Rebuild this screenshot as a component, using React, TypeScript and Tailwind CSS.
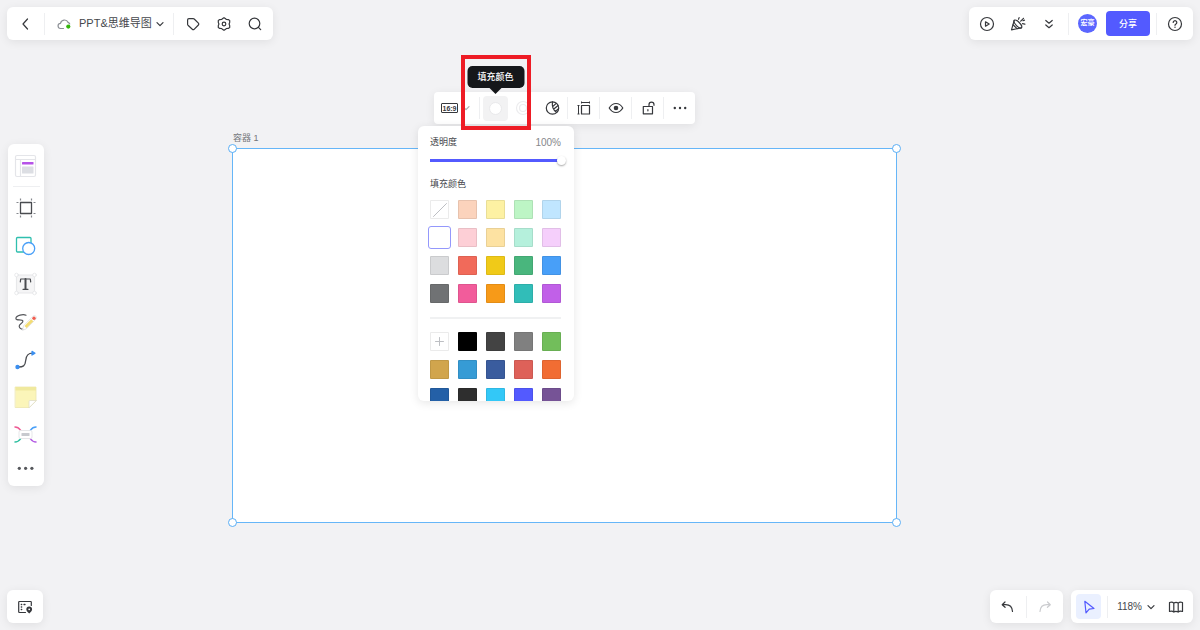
import { useState } from 'react';
import type { ReactNode } from 'react';

const presetColors = [
  'none', '#fbd3bc', '#fdf1a3', '#bdf5c5', '#c0e6ff',
  '#ffffff', '#fdcfd6', '#fde2a2', '#b5f0dc', '#f5cffb',
  '#dcdddf', '#f16a5a', '#f0ca18', '#49b67d', '#489ff8',
  '#707274', '#f25c9b', '#f79a18', '#31bdb8', '#c160e8',
];

const customColors = [
  'add', '#000000', '#434343', '#808080', '#72be5b',
  '#d1a54d', '#369bd5', '#3a5c9e', '#de6159', '#f16d33',
  '#2460a7', '#2e2e2e', '#33c8f7', '#535aff', '#765396',
];

const Icon = ({ size = 16, className = 'text-[#36383c]', children }: { size?: number; className?: string; children: ReactNode }) => (
  <svg
    width={size}
    height={size}
    viewBox={`0 0 ${size} ${size}`}
    fill="none"
    stroke="currentColor"
    strokeWidth="1.2"
    strokeLinecap="round"
    strokeLinejoin="round"
    className={`shrink-0 ${className}`}
    aria-hidden="true"
  >
    {children}
  </svg>
);

const IconButton = ({ label, className = 'w-[31px]', children }: { label: string; className?: string; children: ReactNode }) => (
  <button type="button" aria-label={label} className={`flex items-center justify-center self-stretch ${className}`}>
    {children}
  </button>
);

const Bar = ({ className = '', children }: { className?: string; children: ReactNode }) => (
  <div className={`flex h-[33px] items-center rounded-md bg-white shadow-[0_2px_10px_rgba(0,0,0,0.08)] ${className}`}>
    {children}
  </div>
);

const Divider = () => <div className="h-[22px] w-px shrink-0 bg-[#eeeff1]" />;

const ChevronDown = () => (
  <Icon size={8}>
    <path d="M1 2.6 4 5.6 7 2.6" />
  </Icon>
);

const Header = () => (
  <header className="relative flex justify-between px-[7px] pt-[7px]">
    <Bar className="pr-[2px] pl-px">
      <IconButton label="返回" className="w-9">
        <Icon><path d="M9.500 3 5 8l4.500 5" /></Icon>
      </IconButton>
      <Divider />
      <button type="button" className="flex items-center self-stretch pr-[9px] pl-3 text-[11px] text-[#45474c]">
        <Icon size={14} className="text-[#8d9096]">
          <path d="M6.500 11.500H3.800a2.600 2.600 0 0 1-.3-5.200 4 4 0 0 1 7.600-.9 2.900 2.900 0 0 1 1.600 1.600" />
          <circle cx="11.300" cy="9.600" r="2.100" fill="#34b60c" stroke="none" />
        </Icon>
        <span className="mr-1 ml-2">PPT&amp;思维导图</span>
        <ChevronDown />
      </button>
      <Divider />
      <div className="flex self-stretch pl-1">
        <IconButton label="标签">
          <Icon>
            <path d="M2.600 3.900c0-.7.600-1.300 1.300-1.300h4.300c.4 0 .7.100 1 .4l4.200 4.200c.5.500.5 1.300 0 1.800l-4.300 4.300c-.5.500-1.300.5-1.800 0L3 9.200c-.3-.3-.4-.6-.4-1z" />
          </Icon>
        </IconButton>
        <IconButton label="设置">
          <Icon>
            <path d="M6.300 2.800 8 1.700l1.700 1.100.7.700 1.900.1 1.400.8v2l-.6 1.600.6 1.600v2l-1.400.8-1.900.1-.7.700L8 14.300l-1.700-1.100-.7-.7-1.900-.1-1.400-.8v-2L2.900 8l-.6-1.600v-2l1.400-.8 1.900-.1z" />
            <circle cx="8" cy="8" r="1.800" />
          </Icon>
        </IconButton>
        <IconButton label="搜索">
          <Icon>
            <circle cx="7.500" cy="7.500" r="5.300" />
            <path d="m11.400 11.400 2.300 2.300" />
          </Icon>
        </IconButton>
      </div>
    </Bar>

    <Bar className="pl-[2px]">
      <IconButton label="演示">
        <Icon>
          <circle cx="8" cy="8" r="6.500" />
          <path d="M6.500 5.800v4.400L10.200 8z" />
        </Icon>
      </IconButton>
      <IconButton label="庆祝">
        <Icon>
          <path d="M4.200 4.300 1.500 13.800l10-2" />
          <path d="M4.200 4.300c1-.7 3.100.3 5 2.200s3 4.300 2.300 5.300c-1 .7-3.100-.3-5-2.200S3.500 5.300 4.200 4.300z" />
          <path d="m3 8.800 4 3.800" />
          <path d="m8.500 3.300.6-1.700M10.700 5.200 13.500 2.300M12.500 7.700l2.400.4M13 4.700l1.500-.6" />
        </Icon>
      </IconButton>
      <IconButton label="更多功能">
        <Icon><path d="M4.800 4.500 8 7.200l3.200-2.700M4.800 9 8 11.700 11.200 9" /></Icon>
      </IconButton>
      <div className="ml-1"><Divider /></div>
      <div className="mx-[9px] flex size-[19px] items-center justify-center rounded-full bg-[#5b66ff] text-[7px] font-bold text-white">
        宏豪
      </div>
      <button type="button" className="mr-[6px] h-[25px] w-11 rounded bg-[#535aff] font-['Noto_Sans_CJK_SC',sans-serif] text-[9px] font-medium text-white">
        分享
      </button>
      <Divider />
      <IconButton label="帮助" className="w-9">
        <Icon>
          <circle cx="8" cy="8" r="6.500" />
          <path d="M6.200 6.500a1.800 1.800 0 1 1 2.700 1.600c-.6.300-.9.600-.9 1.200" />
          <circle cx="8" cy="11.200" r=".7" fill="currentColor" stroke="none" />
        </Icon>
      </IconButton>
    </Bar>
  </header>
);

const SideToolbar = () => (
  <aside className="flex w-9 flex-col items-center rounded-md bg-white pt-1 pb-[3px] shadow-[0_2px_10px_rgba(0,0,0,0.08)]">
    <button type="button" aria-label="模板" className="flex h-9 w-full items-center justify-center">
      <Icon size={24}>
        <rect x="1.500" y="1.500" width="20" height="21" rx="1.500" fill="#fff" stroke="#e4e5e9" />
        <path d="M1.500 5.500h20M6.500 5.500v17" stroke="#e4e5e9" />
        <rect x="8" y="8" width="11.500" height="2.500" rx=".5" fill="#b653e8" stroke="none" />
        <rect x="8" y="12.500" width="11.500" height="7" rx=".5" fill="#dcdee3" stroke="none" />
      </Icon>
    </button>
    <div className="my-[2px] h-px w-[27px] bg-[#eeeff1]" />
    <button type="button" aria-label="容器" className="flex h-[38px] w-full items-center justify-center">
      <Icon size={24}>
        <path d="M6.500 2.500v2M6.500 19.500v2M17.500 2.500v2M17.500 19.500v2M2.500 6.500h2M19.500 6.500h2M2.500 17.500h2M19.500 17.500h2" stroke="#85888d" strokeLinecap="butt" />
        <rect x="6.500" y="6.500" width="11" height="11" stroke="#4a4c50" strokeWidth="1.300" />
      </Icon>
    </button>
    <button type="button" aria-label="形状" className="flex h-[38px] w-full items-center justify-center">
      <Icon size={24}>
        <rect x="2.500" y="3.500" width="14.500" height="14.500" rx="1" stroke="#2fbfae" strokeWidth="1.300" />
        <circle cx="14.700" cy="14.500" r="6" fill="#fff" stroke="#489ff8" strokeWidth="1.300" />
      </Icon>
    </button>
    <button type="button" aria-label="文本" className="flex h-[38px] w-full items-center justify-center">
      <Icon size={24}>
        <rect x="2.500" y="3" width="18" height="18" fill="#f5f5f6" stroke="#e7e8ea" />
        <g fill="#fff" stroke="#e3e4e7" strokeWidth=".8">
          <circle cx="2.500" cy="3" r="1.800" />
          <circle cx="20.500" cy="3" r="1.800" />
          <circle cx="2.500" cy="21" r="1.800" />
          <circle cx="20.500" cy="21" r="1.800" />
        </g>
        <path d="M6.300 9.800 6.700 7h9.600l.4 2.800M9 17.300h5" stroke="#4a4c50" strokeWidth="1.200" />
        <path d="M11.500 7v10" stroke="#4a4c50" strokeWidth="2" />
      </Icon>
    </button>
    <button type="button" aria-label="画笔" className="flex h-[38px] w-full items-center justify-center">
      <Icon size={24}>
        <path d="M12 5.200C9.200 3.800 2.200 5.200 1.900 8.300c-.2 3 6.600.2 7 2.800.3 2.300-4 2.500-3.700 5.200.2 1.900 2.200 2.900 4 2.900" stroke="#55575b" />
        <path d="m8.500 20 1.100-4.300L18.900 6.300c1-1 2.300-.8 3 0s.8 2-.2 3L12.400 18.700z" fill="#fff" stroke="#dededf" strokeWidth=".8" />
        <path d="m11.500 17 6.800-6.800" stroke="#f3dc74" strokeWidth="3" strokeLinecap="butt" />
        <circle cx="20" cy="8.300" r="1.700" fill="#f05d50" stroke="none" />
      </Icon>
    </button>
    <button type="button" aria-label="连线" className="flex h-[38px] w-full items-center justify-center">
      <Icon size={24}>
        <path d="M3.700 19c5.500.2 7.500-1 8-6.500.5-5.700 2.500-7.300 7-7.300" stroke="#4a4c50" strokeWidth="1.300" />
        <circle cx="3.500" cy="19" r="2.200" fill="#3b8ff0" stroke="none" />
        <path d="m18 3.300 3 1.900-3 1.900z" fill="#3b8ff0" stroke="#3b8ff0" />
      </Icon>
    </button>
    <button type="button" aria-label="便签" className="flex h-[37px] w-full items-center justify-center">
      <Icon size={24}>
        <path d="M1.500 1h20.500v13.500L15 21.500H1.500z" fill="#fbf5b9" stroke="#ece6ad" strokeWidth=".8" />
        <path d="M1.500 1h20.500v3.500H1.500z" fill="#f0e99e" stroke="none" />
        <path d="M22 14.500h-6c-.6 0-1 .4-1 1v6z" fill="#fff" stroke="#e0ddc6" strokeWidth=".8" />
      </Icon>
    </button>
    <button type="button" aria-label="思维导图" className="flex h-[37px] w-full items-center justify-center">
      <Icon size={24}>
        <path d="M1 4c4 0 4.500 2 6.500 4.500" stroke="#ee5a94" strokeWidth="1.500" />
        <path d="M22 4c-4 0-4.500 2-6.500 4.500" stroke="#489ff8" strokeWidth="1.500" />
        <path d="M1 19c4 0 4.500-2 6.500-4.500" stroke="#2fbfa0" strokeWidth="1.500" />
        <path d="M22 19c-4 0-4.500-2-6.500-4.500" stroke="#b35be3" strokeWidth="1.500" />
        <rect x="5" y="7.500" width="13" height="8" rx="1.500" fill="#fff" stroke="#e3e4e7" strokeWidth=".9" />
        <rect x="7.500" y="10" width="8" height="3" rx=".5" fill="#c8cacf" stroke="none" />
      </Icon>
    </button>
    <button type="button" aria-label="更多" className="flex h-[30px] w-full items-center justify-center">
      <Icon size={24}>
        <g fill="#55575b" stroke="none">
          <circle cx="5.300" cy="12.300" r="1.600" />
          <circle cx="11.600" cy="12.300" r="1.600" />
          <circle cx="17.900" cy="12.300" r="1.600" />
        </g>
      </Icon>
    </button>
  </aside>
);

const Swatch = ({ color, selected, onSelect }: { color: string; selected: boolean; onSelect: (color: string) => void }) => {
  const isIcon = color === 'none' || color === 'add';
  return (
    <button
      type="button"
      aria-label={color}
      aria-pressed={selected}
      onClick={() => onSelect(color)}
      className={`flex size-[19px] items-center justify-center rounded-[1px] border border-black/8 ${selected ? 'outline outline-offset-1 outline-[#9498fc]' : ''}`}
      style={{ backgroundColor: isIcon ? '#ffffff' : color, borderColor: selected ? 'transparent' : undefined }}
    >
      {isIcon && (
        <Icon className="text-[#bdbfc3]">
          {color === 'none' ? <path d="M1.500 14.500 14.500 1.500" strokeWidth="1" /> : <path d="M7.500 3.500v8M3.500 7.500h8" strokeWidth="1" />}
        </Icon>
      )}
    </button>
  );
};

const ColorPanel = () => {
  const [opacity, setOpacity] = useState(100);
  const [selected, setSelected] = useState('#ffffff');

  return (
    <div className="absolute top-[126px] left-[418px] max-h-[275px] w-[156px] overflow-hidden rounded-md bg-white pt-[9px] pr-[13px] pl-3 font-['Noto_Sans_CJK_SC',sans-serif] text-[#45474c] shadow-[0_2px_10px_rgba(0,0,0,0.1)]">
      <div className="flex h-[14px] items-center justify-between">
        <label htmlFor="opacity" className="text-[9px]">透明度</label>
        <output htmlFor="opacity" className="font-['Liberation_Sans',sans-serif] text-[10px] text-[#85878b]">{opacity}%</output>
      </div>
      <div className="mt-[6px] -mr-[5px] flex">
        <input
          id="opacity"
          type="range"
          min={0}
          max={100}
          value={opacity}
          onChange={(e) => setOpacity(Number(e.target.value))}
          className="h-[10px] w-full appearance-none bg-[length:100%_3px] bg-center bg-no-repeat [&::-webkit-slider-thumb]:size-[9px] [&::-webkit-slider-thumb]:appearance-none [&::-webkit-slider-thumb]:rounded-full [&::-webkit-slider-thumb]:bg-white [&::-webkit-slider-thumb]:shadow-[0_1px_2px_rgba(0,0,0,0.35)]"
          style={{ backgroundImage: `linear-gradient(to right, #535aff ${opacity - 3}%, transparent ${opacity - 3}%)` }}
        />
      </div>
      <h2 className="mt-3 flex h-[14px] items-center text-[9px]">填充颜色</h2>
      <div className="mt-[9px] grid grid-cols-5 gap-[9px]">
        {presetColors.map((color) => (
          <Swatch key={color} color={color} selected={color === selected} onSelect={setSelected} />
        ))}
      </div>
      <hr className="mt-[14px] mb-[13px] border-t-2 border-[#f0f1f2]" />
      <div className="grid grid-cols-5 gap-[9px]">
        {customColors.map((color) => (
          <Swatch key={color} color={color} selected={color === selected} onSelect={setSelected} />
        ))}
      </div>
    </div>
  );
};

const FloatingToolbar = () => (
  <div className="absolute top-[92px] left-[434px] flex h-8 items-center rounded bg-white shadow-[0_2px_10px_rgba(0,0,0,0.08)]">
    <button type="button" aria-label="16:9" className="flex w-[45px] items-center gap-1 self-stretch pl-[7px]">
      <span className="flex h-[10px] w-[17px] shrink-0 items-center justify-center rounded-[1px] border border-[#36383c] text-[7px] leading-none font-bold text-[#36383c]">
        16:9
      </span>
      <span className="opacity-40"><ChevronDown /></span>
    </button>
    <Divider />
    <button type="button" aria-label="填充颜色" className="relative ml-[3px] flex size-[25px] items-center justify-center rounded-sm bg-[#f2f2f3]">
      <span className="size-[13px] rounded-full border border-[#e9e9eb] bg-white" />
      <span role="tooltip" className="absolute bottom-[33px] left-1/2 flex h-[22px] w-[57px] -translate-x-1/2 items-center justify-center rounded-[5px] bg-[#15171a] font-['Noto_Sans_CJK_SC',sans-serif] text-[9px] font-medium text-white">
        填充颜色
        <span className="absolute top-full border-x-[6px] border-t-[6px] border-x-transparent border-t-[#15171a]" />
      </span>
    </button>
    <IconButton label="描边颜色" className="w-[30px]">
      <Icon className="text-[#ececee]">
        <circle cx="8" cy="8" r="6.500" />
        <circle cx="8" cy="8" r="3.500" />
      </Icon>
    </IconButton>
    <IconButton label="填充样式" className="w-[29px]">
      <Icon>
        <circle cx="7.500" cy="8" r="6.200" />
        <path d="M7.500 1.800c-.7 4.200 1 8.500 4.200 10.600M8 6.200l3.300-2.800M8.800 9l4.300-3.500M10.300 11.400l3.200-2.700" />
      </Icon>
    </IconButton>
    <Divider />
    <IconButton label="尺寸">
      <Icon>
        <rect x="5.500" y="5.500" width="8" height="8.500" />
        <path d="M5.500 2.500h8M5.500 1.500v2M13.500 1.500v2M2.500 5.500V14M1.500 5.500h2M1.500 14h2" strokeWidth="1" strokeLinecap="butt" />
      </Icon>
    </IconButton>
    <Divider />
    <IconButton label="显示">
      <Icon>
        <path d="M1.200 8c1.600-2.700 4-4.500 6.800-4.500s5.200 1.800 6.800 4.500c-1.600 2.700-4 4.500-6.800 4.500S2.800 10.700 1.200 8z" />
        <circle cx="8" cy="8" r="1.700" fill="currentColor" />
      </Icon>
    </IconButton>
    <Divider />
    <IconButton label="锁定">
      <Icon>
        <rect x="3.300" y="6.500" width="9.200" height="7.300" />
        <path d="M9 6.500V4.700a2.500 2.500 0 0 1 5 0v.6M7.900 9.500v1.300" />
      </Icon>
    </IconButton>
    <Divider />
    <IconButton label="更多">
      <Icon>
        <g fill="currentColor" stroke="none">
          <circle cx="2.800" cy="8" r="1.200" />
          <circle cx="8" cy="8" r="1.200" />
          <circle cx="13.200" cy="8" r="1.200" />
        </g>
      </Icon>
    </IconButton>
  </div>
);

const handles = ['-top-[5px] -left-[5px]', '-top-[5px] -right-[5px]', '-bottom-[5px] -left-[5px]', '-right-[5px] -bottom-[5px]'];

const Canvas = () => (
  <main className="absolute inset-0">
    <div className="absolute top-[148px] left-[232px] h-[375px] w-[665px] border border-[#66b6f8] bg-white">
      <span className="absolute -top-[18px] left-0 text-[9px] leading-[14px] whitespace-nowrap text-[#74767b]">容器 1</span>
      {handles.map((position) => (
        <span key={position} className={`absolute size-[9px] rounded-full border border-[#5aaef5] bg-white ${position}`} />
      ))}
    </div>
    <FloatingToolbar />
    <ColorPanel />
    <div className="pointer-events-none absolute top-[55px] left-[461px] h-[75px] w-[70px] border-4 border-[#ee1c25]" />
  </main>
);

const Footer = () => (
  <footer className="relative flex justify-between px-[7px] pb-[7px]">
    <Bar>
      <IconButton label="大纲" className="w-9">
        <Icon>
          <path d="M14.300 6.500V3.200c0-.4-.3-.7-.7-.7H2.400c-.4 0-.7.300-.7.700v9.600c0 .4.300.7.700.7h6.100" />
          <path d="M4.300 5.500h.4M4.300 8h.4M4.300 10.500h.4M7 5.500h1" strokeWidth="1.300" />
          <path d="M12.200 14.500c-2-1.800-2.900-2.800-2.900-4.200a2.900 2.900 0 0 1 5.800 0c0 1.400-.9 2.400-2.900 4.200z" fill="currentColor" stroke="none" />
          <circle cx="12.200" cy="10.300" r=".9" fill="#fff" stroke="none" />
        </Icon>
      </IconButton>
    </Bar>
    <div className="flex gap-2">
      <Bar>
        <IconButton label="撤销" className="w-9">
          <Icon><path d="M5 3 2.200 5.700l2.900 2.600M2.400 5.700h3.300c3.800 0 6.500 2.600 6.800 6.800" /></Icon>
        </IconButton>
        <Divider />
        <IconButton label="重做" className="w-9">
          <Icon className="text-[#cbcccf]"><path d="m10.500 3 2.800 2.700-2.900 2.600M13.100 5.700H9.800c-3.800 0-6.500 2.600-6.800 6.800" /></Icon>
        </IconButton>
      </Bar>
      <Bar className="pl-[5px]">
        <button type="button" aria-label="选择" className="mr-[6px] flex size-[25px] items-center justify-center rounded-sm bg-[#eaf0ff]">
          <Icon className="text-[#535aff]"><path d="M3.800 2.300 13 9.500l-4.800.6-3.200 3.800z" /></Icon>
        </button>
        <Divider />
        <button type="button" className="flex items-center gap-[5px] self-stretch pr-[3px] pl-[9px] text-[10px] text-[#45474c]">
          118%
          <ChevronDown />
        </button>
        <IconButton label="导航地图" className="w-[35px]">
          <Icon><path d="M1.500 3.500c2-.6 3.300-.4 4.300.6 1.500-.9 3-.9 4.400 0 1.100-1 2.500-1.200 4.300-.6v9c-2-.6-3.300-.4-4.300.6-1.500-.9-3-.9-4.400 0-1.100-1-2.500-1.200-4.300-.6zM5.800 4.100v9M10.200 4.100v9" /></Icon>
        </IconButton>
      </Bar>
    </div>
  </footer>
);

const App = () => (
  <div className="relative flex h-screen flex-col overflow-hidden bg-[#f2f2f4] font-['Liberation_Sans','Noto_Sans_CJK_SC',sans-serif]">
    <Canvas />
    <Header />
    <div className="relative flex w-fit flex-1 items-center px-2">
      <SideToolbar />
    </div>
    <Footer />
  </div>
);

export default App;
